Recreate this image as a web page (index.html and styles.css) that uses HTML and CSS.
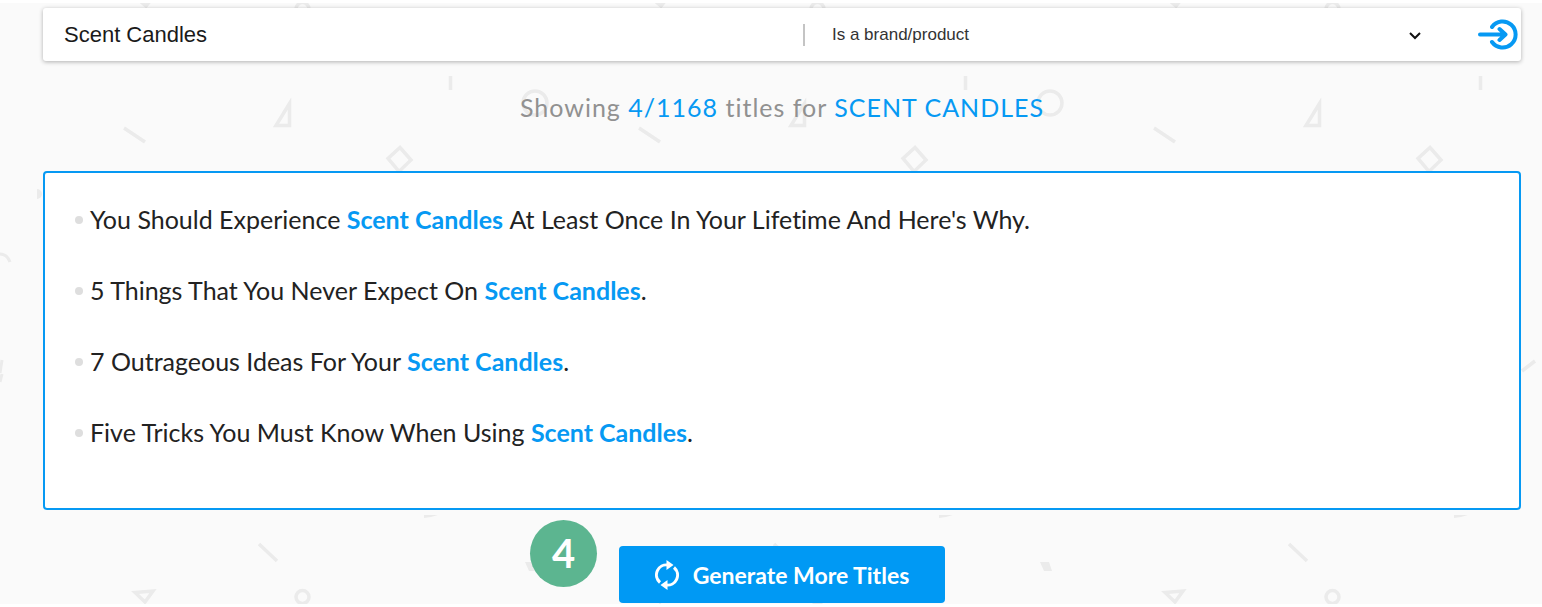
FILE: index.html
```
<!DOCTYPE html>
<html lang="en">
<head>
<meta charset="utf-8">
<meta name="viewport" content="width=device-width, initial-scale=1">
<title>Title Generator</title>
<link rel="stylesheet" href="styles.css">
</head>
<body>
<main class="page">
  <svg class="pattern" width="100%" height="100%" aria-hidden="true">
    <defs>
      <pattern id="shapes" x="37" y="0" width="515" height="601" patternUnits="userSpaceOnUse">
        <g fill="none" stroke="#ebebeb" stroke-width="3.500">
          <path d="M97 -7h20l-8 10zM239 122.500h13.500v-22zM87 125l21 14M413.500 73v14M363 144.500l11 12.500-12 11.500-11-13z"/>
          <circle cx="265.500" cy="6" r="6.500"/>
          <circle cx="498" cy="100" r="12"/>
          <path d="M222 541l18 17M455 368l13-10"/>
          <path d="M98 589.500l18-1.500-8 11z"/>
          <circle cx="265.500" cy="594" r="6.500"/>
        </g>
        <g fill="#ebebeb">
          <circle cx="0" cy="191" r="5"/>
          <path d="M387 512h14l-7 2-7 1zM488 559h9l3 9h-8z"/>
        </g>
      </pattern>
    </defs>
    <rect x="37" width="100%" height="601" fill="url(#shapes)"/>
    <path d="M0 251q7 0 10 8M0 370l2-13M0 379l2-8" fill="none" stroke="#ebebeb" stroke-width="3"/>
  </svg>

  <form class="search">
    <input class="search-text" type="text" value="Scent Candles" aria-label="Keyword">
    <span class="divider"></span>
    <span class="kind">
      <select class="kind-select" aria-label="Keyword type">
        <option>Is a brand/product</option>
      </select>
      <svg class="chevron" viewBox="0 0 12 8" aria-hidden="true"><path d="M1 1l5 5 5-5"/></svg>
    </span>
    <button class="go" type="button" aria-label="Generate titles">
      <svg class="go-icon" viewBox="0 0 40 32" aria-hidden="true">
        <path d="M14 8A13 13 0 1 1 14 23M2 15.500H27M21.500 10L27.500 15.500L21.500 21"/>
      </svg>
    </button>
  </form>

  <h1 class="summary">Showing <span class="accent">4/1168</span> titles for <span class="accent">SCENT CANDLES</span></h1>

  <ul class="titles">
    <li class="title">You Should Experience <b class="keyword">Scent Candles</b> At Least Once In Your Lifetime And Here's Why.</li>
    <li class="title">5 Things That You Never Expect On <b class="keyword">Scent Candles</b>.</li>
    <li class="title">7 Outrageous Ideas For Your <b class="keyword">Scent Candles</b>.</li>
    <li class="title">Five Tricks You Must Know When Using <b class="keyword">Scent Candles</b>.</li>
  </ul>

  <div class="actions">
    <span class="step">4</span>
    <button class="more" type="button">
      <svg class="more-icon" viewBox="0 0 24 30" aria-hidden="true">
        <path class="arc" d="M5 22.500A10 10 0 0 1 13 5M19 7.500A10 10 0 0 1 11 25"/>
        <path class="tip" d="M11.500 0l7 5-7 5zM12.500 20v10l-7-5z"/>
      </svg>
      Generate More Titles
    </button>
  </div>
</main>
</body>
</html>
```
FILE: styles.css
```
* {
  box-sizing: border-box;
}

body {
  margin: 0;
  background: #fff;
  font-family: Lato, sans-serif;
  font-variant-ligatures: none;
}

.page {
  position: relative;
  margin: 3px 0;
  padding: 5px 21px 1px 43px;
  background: #fafafa;
}

.pattern {
  position: absolute;
  inset: 0;
}

.search {
  position: relative;
  display: flex;
  align-items: center;
  height: 53px;
  padding-right: 3px;
  border-radius: 3px;
  background: #fff;
  box-shadow: 0 1px 4px rgba(0, 0, 0, 0.3);
}

.search-text {
  flex: 1;
  min-width: 0;
  padding: 0 21px;
  border: 0;
  outline: 0;
  background: transparent;
  color: #1a1a1a;
  font: 22px "Liberation Sans", Arial, sans-serif;
}

.divider {
  width: 2px;
  height: 22px;
  background: #c4c4c4;
}

.kind {
  position: relative;
  flex: 0 1 591px;
  min-width: 0;
  margin: 0 55px 0 27px;
}

.kind-select {
  display: block;
  width: 100%;
  padding: 0;
  border: 0;
  outline: 0;
  appearance: none;
  background: transparent;
  color: #333;
  font: 17px "Liberation Sans", Arial, sans-serif;
}

.chevron {
  position: absolute;
  right: 2px;
  top: 7px;
  width: 12px;
  height: 8px;
  fill: none;
  stroke: #111;
  stroke-width: 2;
  pointer-events: none;
}

.go {
  display: flex;
  padding: 0;
  border: 0;
  background: transparent;
}

.go-icon {
  width: 40px;
  height: 32px;
  fill: none;
  stroke: #0699f3;
  stroke-width: 4;
  stroke-linecap: round;
  stroke-linejoin: round;
}

.summary {
  position: relative;
  margin: 30px 0 48px;
  color: #919191;
  font-size: 25px;
  font-weight: 400;
  line-height: 32px;
  letter-spacing: 1px;
  text-align: center;
}

.accent {
  color: #0699f3;
}

.titles {
  position: relative;
  display: grid;
  gap: 35px;
  margin: 0;
  padding: 28px 30px 58px;
  border: 2px solid #0699f3;
  border-radius: 4px;
  background: #fff;
  list-style: none;
}

.title {
  display: flex;
  align-items: center;
  color: #222;
  font-size: 25px;
  line-height: 36px;
  white-space: pre-wrap;
}

.title::before {
  content: "";
  flex: none;
  width: 8px;
  height: 8px;
  margin: 2px 7px 0 0;
  border-radius: 50%;
  background: #dedede;
}

.keyword {
  color: #0699f3;
  font-weight: 700;
}

.actions {
  position: relative;
  display: flex;
  justify-content: center;
  padding-top: 36px;
}

.more {
  position: relative;
  display: flex;
  align-items: center;
  justify-content: center;
  gap: 14px;
  min-height: 57px;
  padding: 0 36px;
  border: 0;
  border-radius: 4px;
  background: #0099f4;
  color: #fff;
  font: 700 23px/28px Lato, sans-serif;
  font-variant-ligatures: none;
}

.more-icon {
  width: 24px;
  height: 30px;
}

.arc {
  fill: none;
  stroke: #fff;
  stroke-width: 3;
}

.tip {
  fill: #fff;
}

.step {
  position: absolute;
  top: 10px;
  left: calc(50% - 252px);
  width: 67px;
  height: 67px;
  border-radius: 50%;
  background: #5cb590;
  color: #fff;
  font-size: 40px;
  font-weight: 700;
  line-height: 67px;
  text-align: center;
}
```
